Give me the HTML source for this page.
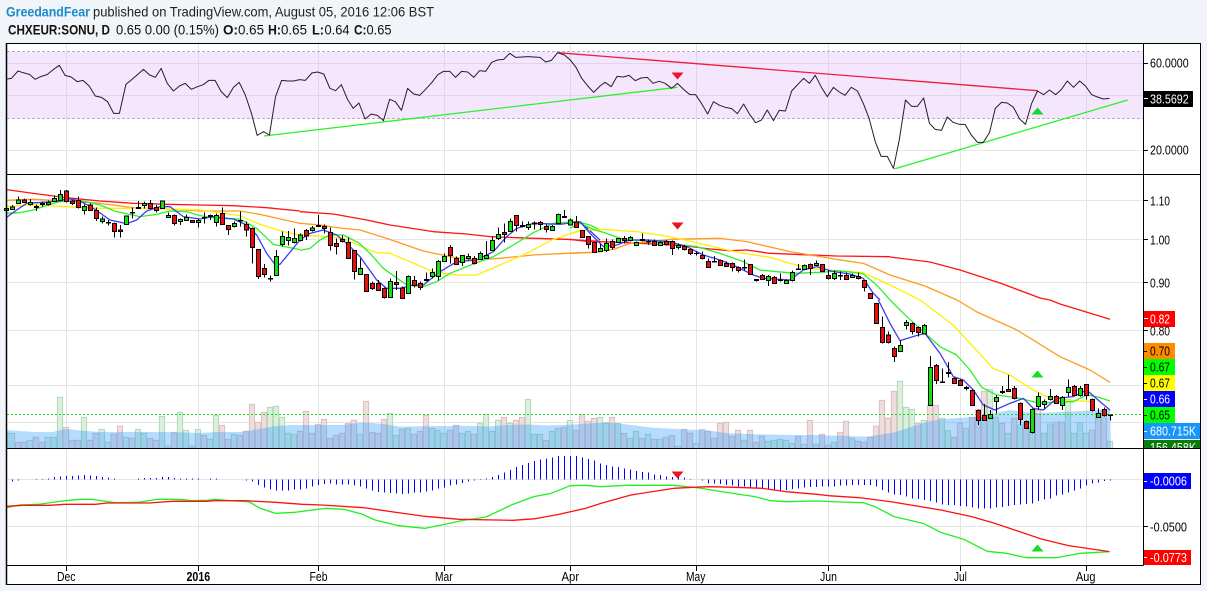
<!DOCTYPE html>
<html><head><meta charset="utf-8"><style>
html,body{margin:0;padding:0;background:#f1f4f8;width:1207px;height:591px;overflow:hidden}
svg{display:block;font-family:"Liberation Sans",Arial,sans-serif}
.ns{vector-effect:non-scaling-stroke;fill:none;stroke-linejoin:round}
.w{fill:none;stroke:#000;stroke-width:3}
.g{fill:#0fe30f;stroke:#000;stroke-width:3}
.r{fill:#e80f0f;stroke:#000;stroke-width:3}
.vg{fill:#dceedd;stroke:#aad6ae;stroke-width:2.5}
.vr{fill:#eedddd;stroke:#d9b9bb;stroke-width:2.5}
.ax{font-size:13px;fill:#000}
.lb{font-size:13px}
</style></head><body>
<svg width="1207" height="591" viewBox="0 0 1207 591" xmlns="http://www.w3.org/2000/svg">
<rect width="1207" height="591" fill="#f1f4f8"/>
<text x="6" y="16.5" font-size="14" font-weight="bold" fill="#1a8ccb" textLength="84" lengthAdjust="spacingAndGlyphs">GreedandFear</text>
<text x="93" y="16.5" font-size="14" fill="#222" textLength="341" lengthAdjust="spacingAndGlyphs">published on TradingView.com, August 05, 2016 12:06 BST</text>
<g font-size="14" fill="#111">
<text x="8" y="34.5" font-weight="bold" textLength="102" lengthAdjust="spacingAndGlyphs">CHXEUR:SONU, D</text>
<text x="116" y="34.5" textLength="103" lengthAdjust="spacingAndGlyphs">0.65 0.00 (0.15%)</text>
<text x="223" y="34.5" font-weight="bold" textLength="15" lengthAdjust="spacingAndGlyphs">O:</text>
<text x="238" y="34.5" textLength="26" lengthAdjust="spacingAndGlyphs">0.65</text>
<text x="268" y="34.5" font-weight="bold" textLength="13" lengthAdjust="spacingAndGlyphs">H:</text>
<text x="281" y="34.5" textLength="26" lengthAdjust="spacingAndGlyphs">0.65</text>
<text x="312" y="34.5" font-weight="bold" textLength="12" lengthAdjust="spacingAndGlyphs">L:</text>
<text x="324.5" y="34.5" textLength="25" lengthAdjust="spacingAndGlyphs">0.64</text>
<text x="354" y="34.5" font-weight="bold" textLength="12.5" lengthAdjust="spacingAndGlyphs">C:</text>
<text x="366.5" y="34.5" textLength="25" lengthAdjust="spacingAndGlyphs">0.65</text>
</g>
<rect x="6" y="43" width="1194" height="542" fill="#fff"/>

<!-- RSI band and grid -->
<rect x="7" y="52" width="1136" height="66.5" fill="#f4e7fd"/>
<path d="M66.5 44V174M198.5 44V174M318.5 44V174M444.5 44V174M570.5 44V174M696.5 44V174M828.5 44V174M960.5 44V174M1086.5 44V174M7 150.5H1143" stroke="#e5e5e5" stroke-width="1" fill="none"/>
<path d="M66.5 52V118M198.5 52V118M318.5 52V118M444.5 52V118M570.5 52V118M696.5 52V118M828.5 52V118M960.5 52V118M1086.5 52V118M7 63.5H1143M7 95.5H1143" stroke="#e1d5ec" stroke-width="1" fill="none"/>
<path d="M7 51.5H1143M7 118.5H1143" stroke="#b9a9c4" stroke-width="1" stroke-dasharray="3 2" fill="none"/>
<path d="M264 136L677.4 87.3M894.2 169L1127.7 100" stroke="#2cf22c" stroke-width="1.3" fill="none"/>
<path d="M557.6 52.7L1037.5 90.7" stroke="#f01c3c" stroke-width="1.3" fill="none"/>
<g transform="scale(.3827,.33333)"><polyline class="ns" stroke="#2a1a2a" stroke-width="1" points="18,237 30,235 47,213 60,218 77,223 92,238 108,229 123,224 140,208 155,196 170,226 186,231 202,245 217,241 233,258 249,288 265,292 281,305 297,340 312,340 329,253 345,238 375,208 391,225 406,232 421,205 437,250 453,273 469,258 484,250 500,268 516,260 531,254 546,241 562,241 578,275 594,293 610,262 625,247 641,285 657,340 672,406 689,395 704,405 720,290 736,241 752,243 767,243 783,239 798,241 815,219 830,216 846,222 862,265 877,272 892,254 908,298 923,325 938,309 954,357 970,342 986,346 1002,362 1018,298 1033,305 1049,331 1065,265 1081,282 1097,286 1112,268 1128,248 1144,224 1159,214 1175,214 1190,232 1206,214 1222,216 1238,232 1253,212 1269,214 1285,187 1300,180 1316,178 1332,160 1347,172 1380,170 1411,172 1426,186 1441,181 1457,158 1475,165 1490,180 1504,200 1520,235 1536,258 1551,277 1568,258"/></g>
<g transform="translate(600,0) scale(.38715,.33333)"><polyline class="ns" stroke="#2a1a2a" stroke-width="1" points="0,258 13,247 29,260 44,229 60,231 75,226 91,242 106,234 122,232 137,250 153,244 168,250 185,265 200,250 216,268 232,284 247,284 262,310 278,342 293,305 309,316 324,322 340,326 355,341 371,312 386,342 402,368 417,360 432,330 448,362 463,331 479,333 495,273 526,235 541,250 556,226 572,262 587,290 603,262 618,276 633,286 649,262 665,273 680,310 695,355 711,425 726,469 742,469 758,505 773,420 789,300 805,319 820,319 836,294 851,370 866,388 882,391 897,351 912,367 928,373 943,373 959,405 975,427 990,427 1006,398 1021,325 1037,307 1052,309 1068,322 1084,357 1099,373 1115,310 1130,273 1146,284 1161,270 1177,284 1192,268 1207,243 1223,262 1239,243 1254,258 1270,284 1285,291 1300,297 1316,295"/></g>
<path d="M671.5 72.500h12l-6 7z" fill="#f0102c"/>
<path d="M1031.500 114.500h12l-6-7z" fill="#0fd82f"/>

<!-- Main grid -->
<path d="M66.500 175V448M198.500 175V448M318.500 175V448M444.500 175V448M570.500 175V448M696.500 175V448M828.500 175V448M960.500 175V448M1086.500 175V448M7 200.500H1143M7 239.500H1143M7 282.500H1143M7 330.500H1143M7 385.500H1143M7 422.500H1143" stroke="#e4e4e4" stroke-width="1" fill="none"/>

<!-- Volume -->
<g transform="translate(0,385) scale(.33333)">
<path class="vg" d="M22 190V145H44V190M172 190V37H188V190M244 190V97H260V190M297 190V133H314V190M406 190V133H422V190M478 190V94H494V190M532 190V82H548V190M550 190V136H566V190M586 190V133H602V190M640 190V91H656V190M694 190V148H710V190M802 190V67H818V190M820 190V64H836V190M838 190V97H854V190M856 190V145H872V190M874 190V148H890V190M1072 190V148H1088V190M1162 190V85H1178V190M1216 190V130H1232V190M81 190V166H98V190M135 190V157H152V190M153 190V157H170V190M370 190V157H386V190M424 190V145H440V190M496 190V184H512V190M315 190V172H332V190M1180 190V151H1196V190M1288 190V130H1304V190M1306 190V136H1320V190M622 190V163H638V190"/>
<path class="vr" d="M46 190V172H62V190M63 190V172H80V190M99 190V157H116V190M117 190V172H134V190M189 190V127H206V190M207 190V166H224V190M225 190V166H242V190M261 190V166H278V190M279 190V145H296V190M333 190V148H350V190M352 190V124H368V190M388 190V160H404V190M442 190V160H458V190M460 190V166H476V190M514 190V142H530V190M568 190V184H584V190M604 190V151H620V190M658 190V121H674V190M676 190V163H692V190M712 190V151H728V190M730 190V139H746V190M748 190V58H764V190M766 190V112H782V190M784 190V82H800V190M892 190V139H908V190M910 190V79H926V190M928 190V145H944V190M946 190V118H962V190M964 190V103H980V190M982 190V160H998V190M1000 190V151H1016V190M1018 190V145H1034V190M1036 190V115H1052V190M1054 190V106H1070V190M1090 190V49H1106V190M1108 190V142H1124V190M1126 190V145H1142V190M1144 190V103H1160V190M1198 190V133H1214V190M1234 190V148H1250V190M1252 190V139H1268V190M1270 190V91H1286V190"/>
</g>
<g transform="translate(440,385) scale(.33333)">
<path class="vg" d="M2 190V145H20V190M58 190V145H74V190M76 190V139H92V190M112 190V115H128V190M130 190V88H146V190M148 190V139H164V190M166 190V106H182V190M202 190V115H218V190M256 190V43H272V190M274 190V148H290V190M292 190V148H308V190M328 190V139H344V190M346 190V130H362V190M382 190V106H398V190M472 190V97H488V190M490 190V115H506V190M526 190V115H542V190M562 190V160H578V190M580 190V139H596V190M616 190V148H632V190M652 190V163H668V190M706 190V184H722V190M760 190V175H776V190M904 190V166H920V190M976 190V169H992V190M994 190V166H1010V190M1012 190V163H1028V190M1030 190V166H1046V190M1048 190V175H1064V190M1084 190V178H1100V190M1120 190V178H1136V190M1174 190V172H1190V190M1228 190V160H1244V190"/>
<path class="vr" d="M22 190V136H38V190M40 190V121H56V190M94 190V148H110V190M184 190V97H200V190M220 190V106H236V190M238 190V97H254V190M310 190V166H326V190M364 190V127H380V190M400 190V136H416V190M418 190V88H434V190M436 190V109H452V190M454 190V100H470V190M508 190V97H524V190M544 190V145H560V190M598 190V160H614V190M634 190V163H650V190M670 190V157H686V190M688 190V151H704V190M724 190V133H740V190M742 190V145H758V190M778 190V133H794V190M796 190V139H812V190M814 190V160H830V190M832 190V115H848V190M850 190V112H866V190M868 190V154H884V190M886 190V136H902V190M922 190V136H938V190M940 190V172H956V190M958 190V154H974V190M1066 190V154H1082V190M1102 190V106H1118V190M1138 190V148H1154V190M1156 190V181H1172V190M1192 190V142H1208V190M1210 190V109H1226V190M1246 190V169H1262V190M1264 190V172H1280V190M1282 190V157H1298V190"/>
</g>
<g transform="translate(860,300) scale(.33333)">
<path class="vg" d="M112 444V244H128V444M130 444V322H146V444M148 444V328H164V444M184 444V361H200V444M238 444V355H254V444M256 444V392H272V444M310 444V385H326V444M382 444V268H398V444M400 444V352H416V444M436 444V400H452V444M472 444V375H488V444M508 444V385H524V444M544 444V400H560V444M562 444V372H578V444M616 444V298H632V444M634 444V400H650V444M652 444V368H668V444M670 444V400H686V444M742 444V424H758V444"/>
<path class="vr" d="M40 444V378H56V444M58 444V301H74V444M76 444V355H92V444M94 444V274H110V444M166 444V370H182V444M202 444V316H218V444M220 444V316H236V444M274 444V412H290V444M292 444V370H308V444M328 444V352H344V444M346 444V328H362V444M364 444V274H380V444M418 444V370H434V444M454 444V355H470V444M490 444V370H506V444M526 444V330H542V444M580 444V366H596V444M598 444V366H614V444M688 444V390H704V444M706 444V340H722V444M724 444V330H740V444"/>
</g>
<polygon fill="rgba(60,160,255,.38)" points="7,448 7,430 33,432 53,432 62,429.500 67,429 80,430.500 100,432 167,432 200,433 217,432 240,432 253,430 273,426.500 290,425 343,425 363,422.300 383,424 400,426.500 450,426 457,425.500 490,426.500 507,425 530,424.500 547,425.500 573,424.500 607,422.300 627,424.500 653,427.700 687,429.500 707,430.300 727,433.300 757,434.300 790,435 817,435 867,436.700 893,432.700 927,421.700 940,419.300 977,416.700 1010,410 1033,413.300 1067,411.700 1110,409.300 1111,448"/>
<path d="M7 414.500H1143" stroke="#12e012" stroke-width="1" stroke-dasharray="2 2" fill="none"/>

<!-- Moving averages -->
<g transform="translate(0,175) scale(.33333)" stroke-width="1.3">
<polyline class="ns" stroke="#ff1414" points="20,44 100,55 200,68 300,78 400,85 500,88 600,90 700,92 800,98 900,108"/>
<polyline class="ns" stroke="#ff9a1e" points="20,76 100,73 200,78 300,85 400,98 500,102 600,108 720,108 780,118 900,145"/>
<polyline class="ns" stroke="#ffee00" points="20,95 100,90 200,95 300,100 430,100 600,105 720,122 780,148 850,170 900,180"/>
<polyline class="ns" stroke="#2cf02c" points="20,115 60,113 100,105 150,88 180,80 250,78 300,90 350,110 420,125 470,118 510,108 560,110 600,122 650,130 720,132 770,160 820,208 900,224"/>
<polyline class="ns" stroke="#3c3cf0" points="20,127 50,105 80,85 130,82 180,78 200,70 240,78 280,100 330,135 380,146 410,135 440,108 480,95 510,95 550,125 600,132 640,125 700,132 740,150 770,180 800,235 825,268 840,268 900,195"/>
</g>
<g transform="translate(300,190) scale(.33333)" stroke-width="1.3">
<polyline class="ns" stroke="#ff1414" points="0,65 100,72 200,90 270,105 400,125 500,132 570,140 650,143 700,145 800,148 860,152 900,154"/>
<polyline class="ns" stroke="#ff9a1e" points="0,100 60,105 120,114 180,120 260,145 370,183 450,200 520,210 600,205 700,195 800,190 900,186"/>
<polyline class="ns" stroke="#ffee00" points="0,135 50,138 130,145 190,172 230,188 270,190 330,215 400,245 470,255 530,255 600,225 680,190 760,148 840,122 900,120"/>
<polyline class="ns" stroke="#2cf02c" points="0,181 30,175 60,150 90,135 130,135 175,158 210,190 250,235 285,260 320,285 370,290 410,275 450,250 520,222 580,200 640,165 700,128 760,100 830,95 870,105 900,120"/>
<polyline class="ns" stroke="#3c3cf0" points="0,150 30,130 70,120 110,135 140,160 180,200 230,270 260,295 300,295 340,285 370,285 420,245 470,215 530,210 580,185 620,140 650,115 700,100 780,103 840,95 900,150"/>
</g>
<g transform="translate(570,200) scale(.33333)" stroke-width="1.3">
<polyline class="ns" stroke="#ff1414" points="0,118 50,124 150,127 250,132 350,138 420,147 480,152 530,150 600,160 700,164 800,168 960,170"/>
<polyline class="ns" stroke="#ff9a1e" points="0,160 70,157 130,148 180,130 250,125 300,118 450,115 530,125 660,155 800,178 880,190 960,225"/>
<polyline class="ns" stroke="#ffee00" points="0,100 50,90 100,88 200,95 300,110 380,128 450,145 520,160 600,172 660,190 720,205 800,212 880,218 960,255"/>
<polyline class="ns" stroke="#2cf02c" points="0,85 30,70 70,88 110,100 160,118 220,122 300,130 380,140 450,160 520,185 570,210 620,215 680,220 720,218 760,217 800,212 840,216 880,222 920,255 960,300"/>
<polyline class="ns" stroke="#3c3cf0" points="30,65 60,100 100,140 140,135 180,120 230,120 300,125 350,140 400,165 450,180 500,200 550,225 580,235 660,240 700,210 740,200 790,215 840,222 880,235 910,280 930,300"/>
</g>
<polyline class="ns" stroke="#ff1414" stroke-width="1.3" points="890,257 930,262 960,270 1000,283 1040,298 1050,300 1060,304 1110,319.300"/>
<polyline class="ns" stroke="#ff9a1e" stroke-width="1.3" points="890,275 925,286 957,300 977,312 1017,330 1060,356.700 1090,370 1110,382.300"/>
<polyline class="ns" stroke="#ffee00" stroke-width="1.3" points="890,285 920,300 953,325 970,343.300 993,368.300 1010,375 1033,390 1047,396.700 1067,400 1093,401.700"/>
<g transform="translate(860,300) scale(.33333)" stroke-width="1.3">
<polyline class="ns" stroke="#2cf02c" points="90,0 130,40 195,100 240,140 290,165 330,210 365,262 410,285 480,295 540,310 600,305 640,305 680,285 710,290 750,303"/>
<polyline class="ns" stroke="#3c3cf0" points="55,0 90,70 120,122 175,105 195,100 240,160 280,230 310,240 340,270 370,315 405,330 450,310 490,295 520,325 550,330 590,295 640,290 680,270 720,305 750,330"/>
</g>

<!-- Candles A -->
<g transform="translate(.17,175) scale(.33333)" shape-rendering="crispEdges">
<path class="w" d="M19 100V106M37 90V103M55 65V86M73 70V83M91 72V92M109 88V108M127 80V94M145 76V92M163 62V80M181 45V77M199 45V82M217 75V90M235 65V100M253 88V118M271 85V108M289 98V138M307 125V145M325 135V152M343 142V188M361 150V188M379 122V150M397 98V130M415 78V102M433 80V100M451 75V102M469 90V112M487 76V102M505 112V128M523 118V152M541 130V150M559 118V138M577 135V144M595 130V158M613 112V145M631 118V135M649 115V155M667 98V150M685 150V180M703 140V158M721 110V155M739 140V185M757 158V265M775 222V312M793 267V308M811 302V320M829 225V302M847 170V215M865 168V212M883 160V205"/>
<path class="g" d="M13 100h12V106h-12zM31 96h12V103h-12zM49 75h12V86h-12zM85 82h12V88h-12zM121 86h12V89h-12zM139 82h12V88h-12zM157 70h12V80h-12zM175 58h12V77h-12zM247 94h12V106h-12zM301 132h12V140h-12zM319 142h12V144h-12zM373 123h12V149h-12zM427 85h12V91h-12zM481 78h12V100h-12zM499 121h12V127h-12zM535 133h12V139h-12zM553 127h12V136h-12zM589 136h12V142h-12zM607 127h12V129h-12zM625 122h12V124h-12zM643 121h12V143h-12zM697 145h12V154h-12zM805 310h12V312h-12zM823 244h12V301h-12zM841 184h12V208h-12zM859 188h12V196h-12zM877 190h12V203h-12z"/>
<path class="r" d="M67 75h12V83h-12zM103 95h12V97h-12zM193 48h12V80h-12zM211 78h12V86h-12zM229 76h12V97h-12zM265 90h12V106h-12zM283 106h12V131h-12zM337 146h12V170h-12zM355 165h12V170h-12zM391 112h12V114h-12zM409 98h12V100h-12zM445 86h12V100h-12zM463 97h12V106h-12zM517 121h12V146h-12zM571 136h12V142h-12zM661 115h12V148h-12zM679 151h12V163h-12zM715 136h12V138h-12zM733 148h12V165h-12zM751 160h12V217h-12zM769 223h12V304h-12zM787 280h12V298h-12z"/>
</g>
<!-- Candles B -->
<g transform="translate(300.17,190) scale(.33333)" shape-rendering="crispEdges">
<path class="w" d="M1 130V155M19 117V150M37 108V125M55 75V110M73 103V130M91 112V182M109 145V193M127 136V158M145 143V207M163 180V268M181 205V255M199 253V305M217 275V300M235 270V303M253 293V326M271 265V323M289 243V300M307 290V327M325 257V312M343 258V292M361 275V300M379 248V275M397 235V265M415 210V272M433 190V216M451 165V220M469 200V225M487 196V228M505 190V208M523 198V224M541 185V210M559 153V207M577 140V183M595 112V150M613 100V158M631 85V125M649 75V125M667 95V112M685 95V120M703 95V118M721 93V120M739 103V128M757 105V122M775 70V101M793 60V82"/>
<path class="g" d="M-5 135h12V151h-12zM31 114h12V121h-12zM175 235h12V253h-12zM265 274h12V322h-12zM319 259h12V310h-12zM391 247h12V260h-12zM409 214h12V260h-12zM427 199h12V214h-12zM481 196h12V217h-12zM499 199h12V205h-12zM535 190h12V208h-12zM553 196h12V205h-12zM571 151h12V181h-12zM589 133h12V145h-12zM625 94h12V124h-12zM679 103h12V112h-12zM697 99h12V102h-12zM751 109h12V121h-12zM769 73h12V100h-12zM787 79h12V82h-12z"/>
<path class="r" d="M13 122h12V138h-12zM49 106h12V109h-12zM67 109h12V115h-12zM85 128h12V166h-12zM103 160h12V169h-12zM121 148h12V154h-12zM139 157h12V205h-12zM157 181h12V244h-12zM193 253h12V304h-12zM211 280h12V296h-12zM229 280h12V301h-12zM247 295h12V323h-12zM283 277h12V283h-12zM301 294h12V325h-12zM337 271h12V287h-12zM355 280h12V292h-12zM373 268h12V271h-12zM445 172h12V196h-12zM463 205h12V223h-12zM517 205h12V220h-12zM607 127h12V133h-12zM643 76h12V106h-12zM661 106h12V109h-12zM715 98h12V103h-12zM733 109h12V118h-12z"/>
</g>
<!-- Candles C -->
<g transform="translate(570.17,200) scale(.33333)" shape-rendering="crispEdges">
<path class="w" d="M1 55V76M19 48V83M37 91V112M55 108V146M73 127V157M91 130V155M109 115V156M127 118V148M145 115V127M163 108V130M181 108V125M199 124V138M217 100V125M235 118V135M253 118V138M271 124V138M289 120V136M307 122V165M325 130V148M343 135V152M361 145V165M379 155V166M397 155V178M415 175V204M433 168V188M451 178V198M469 185V200M487 188V215M505 200V218M523 178V212M541 192V224M559 238V245M577 222V240M595 225V258M613 228V252M631 220V245M649 238V252M667 212V244M685 192V210M703 194V210M721 190V225M739 182V198M757 192V216M775 212V238M793 212V240M811 214V240M829 218V240M847 220V234M865 218V238M883 240V275M901 280V295"/>
<path class="g" d="M-5 60h12V75h-12zM85 145h12V154h-12zM103 130h12V151h-12zM139 115h12V127h-12zM175 112h12V121h-12zM193 127h12V136h-12zM229 124h12V126h-12zM265 127h12V136h-12zM319 136h12V142h-12zM373 160h12V161h-12zM589 229h12V241h-12zM625 240h12V241h-12zM643 241h12V250h-12zM661 217h12V241h-12zM697 196h12V208h-12zM733 190h12V196h-12zM787 220h12V235h-12zM841 226h12V232h-12z"/>
<path class="r" d="M13 66h12V82h-12zM31 91h12V112h-12zM49 109h12V133h-12zM67 127h12V157h-12zM121 124h12V142h-12zM157 115h12V121h-12zM211 118h12V121h-12zM247 124h12V136h-12zM283 124h12V134h-12zM301 124h12V145h-12zM337 139h12V148h-12zM355 148h12V160h-12zM391 166h12V175h-12zM409 184h12V202h-12zM427 184h12V186h-12zM445 181h12V196h-12zM463 190h12V199h-12zM481 190h12V202h-12zM499 202h12V211h-12zM517 202h12V204h-12zM535 193h12V223h-12zM553 238h12V241h-12zM571 226h12V238h-12zM607 232h12V250h-12zM679 207h12V208h-12zM715 193h12V205h-12zM751 193h12V214h-12zM769 226h12V235h-12zM805 226h12V228h-12zM823 226h12V238h-12zM859 229h12V235h-12zM877 241h12V262h-12zM895 280h12V295h-12z"/>
</g>
<!-- Candles D -->
<g transform="translate(860.17,300) scale(.33333)" shape-rendering="crispEdges">
<path class="w" d="M49 10V72M67 50V130M85 95V130M103 140V186M121 122V156M139 60V88M157 68V104M175 80V110M193 72V103M211 168V318M229 192V252M247 205V248M265 186V232M283 232V252M301 238V258M319 258V272M337 268V318M355 328V375M373 312V362M391 330V356M409 285V340M427 258V282M445 225V276M463 258V298M481 308V375M499 362V387M517 325V400M535 278V328M553 298V325M571 267V302M589 285V312M607 288V330M625 238V290M643 255V288M661 258V290M679 252V298M697 296V335M715 325V353M733 322V350M751 345V362"/>
<path class="g" d="M115 136h12V154h-12zM133 67h12V76h-12zM187 76h12V102h-12zM205 202h12V316h-12zM241 246h12V247h-12zM385 343h12V355h-12zM403 292h12V304h-12zM511 328h12V397h-12zM529 289h12V319h-12zM547 304h12V313h-12zM565 289h12V298h-12zM601 292h12V316h-12zM619 262h12V277h-12zM655 265h12V286h-12zM709 340h12V352h-12z"/>
<path class="r" d="M43 10h12V70h-12zM61 82h12V128h-12zM79 105h12V128h-12zM97 145h12V170h-12zM151 70h12V94h-12zM169 82h12V97h-12zM223 196h12V241h-12zM259 217h12V220h-12zM277 235h12V250h-12zM295 241h12V256h-12zM313 262h12V265h-12zM331 271h12V316h-12zM349 331h12V361h-12zM367 346h12V361h-12zM421 274h12V277h-12zM439 268h12V274h-12zM457 265h12V295h-12zM475 310h12V358h-12zM493 364h12V385h-12zM583 289h12V310h-12zM637 259h12V286h-12zM673 253h12V286h-12zM691 298h12V331h-12zM727 328h12V346h-12zM745 345h12V347h-12z"/>
</g>
<path d="M671.500 222.500h12l-6 7z" fill="#f0101c"/>
<path d="M1031.500 377.500h12l-6-7z" fill="#0fe01f"/>

<!-- MACD -->
<path d="M66.500 449V565M198.500 449V565M318.500 449V565M444.500 449V565M570.500 449V565M696.500 449V565M828.500 449V565M960.500 449V565M1086.500 449V565M7 479.500H1143M7 526.500H1143" stroke="#e4e4e4" stroke-width="1" fill="none"/>
<g transform="translate(0,445) scale(1,.33333)">
<path class="ns" stroke="#0000ff" stroke-width="1" shape-rendering="crispEdges" d="M12.500 104V110M18.500 104V107M36.500 104V102M42.500 104V102M48.500 104V100M54.500 104V96M60.500 104V94M66.500 104V93M72.500 104V93M78.500 104V92M84.500 104V90M90.500 104V92M96.500 104V93M102.500 104V96M108.500 104V98M114.500 104V101M138.500 104V100M144.500 104V99M150.500 104V99M156.500 104V99M162.500 104V96M168.500 104V96M174.500 104V99M180.500 104V101M186.500 104V101M192.500 104V101M198.500 104V101M210.500 104V101M216.500 104V101M246.500 104V107M252.500 104V110M258.500 104V120M264.500 104V128M270.500 104V134M276.500 104V137M282.500 104V137M288.500 104V137M294.500 104V133M300.500 104V133M306.500 104V130M312.500 104V125M318.500 104V120M324.500 104V117M330.500 104V116M336.500 104V118M342.500 104V118M348.500 104V118M354.500 104V121M360.500 104V125M366.500 104V130M372.500 104V137M378.500 104V141M384.500 104V143M390.500 104V144M396.500 104V145M402.500 104V147M408.500 104V145M414.500 104V143M420.500 104V143M426.500 104V140M432.500 104V136M438.500 104V130M444.500 104V128M450.500 104V122M456.500 104V118M462.500 104V114M468.500 104V110M474.500 104V106M480.500 104V102M486.500 104V100M492.500 104V96M498.500 104V90M504.500 104V83M510.500 104V75M516.500 104V66M522.500 104V60M528.500 104V54M534.500 104V48M540.500 104V44M546.500 104V40M552.500 104V38M558.500 104V33M564.500 104V33M570.500 104V33M576.500 104V33M582.500 104V37M588.500 104V42M594.500 104V47M600.500 104V55M606.500 104V60M612.500 104V64M618.500 104V66M624.500 104V70M630.500 104V73M636.500 104V78M642.500 104V81M648.500 104V82M654.500 104V88M660.500 104V90M666.500 104V94M672.500 104V96M678.500 104V94M684.500 104V98M690.500 104V102M702.500 104V107M708.500 104V115M714.500 104V116M720.500 104V117M726.500 104V120M732.500 104V122M738.500 104V124M744.500 104V124M750.500 104V127M756.500 104V128M762.500 104V130M768.500 104V132M774.500 104V135M780.500 104V136M786.500 104V135M792.500 104V132M798.500 104V130M804.500 104V128M810.500 104V126M816.500 104V126M822.500 104V125M828.500 104V124M834.500 104V124M840.500 104V122M846.500 104V122M852.500 104V120M858.500 104V120M864.500 104V120M870.500 104V120M876.500 104V125M882.500 104V135M888.500 104V143M894.500 104V148M900.500 104V150M906.500 104V155M912.500 104V160M918.500 104V162M924.500 104V165M930.500 104V168M936.500 104V172M942.500 104V178M948.500 104V180M954.500 104V180M960.500 104V183M966.500 104V185M972.500 104V188M978.500 104V190M984.500 104V191M990.500 104V191M996.500 104V188M1002.500 104V186M1008.500 104V183M1014.500 104V180M1020.500 104V178M1026.500 104V177M1032.500 104V176M1038.500 104V168M1044.500 104V163M1050.500 104V160M1056.500 104V152M1062.500 104V148M1068.500 104V143M1074.500 104V137M1080.500 104V130M1086.500 104V122M1092.500 104V115M1098.500 104V112M1104.500 104V108M1110.500 104V107"/>
</g>
<g transform="translate(0,445) scale(.3827,.33333)">
<polyline class="ns" stroke="#20f020" stroke-width="1.300" points="18,188 50,180 100,178 170,167 210,163 240,163 300,173 360,172 410,163 450,163 480,164 500,167 540,166 560,163 600,167 650,170 680,190 720,205 770,202 850,190 900,193 945,207 980,225 1040,242 1110,250 1170,236 1210,226 1270,216 1340,178 1395,155 1440,145 1490,122 1530,121 1568,125"/>
<polyline class="ns" stroke="#ff1010" stroke-width="1.300" points="18,184 60,181 130,181 170,178 250,178 280,174 390,174 450,169 540,169 560,167 640,167 720,172 790,178 840,180 950,188 1040,203 1110,214 1200,223 1340,226 1400,221 1460,208 1530,190 1568,176"/>
</g>
<g transform="translate(600,445) scale(.38715,.33333)">
<polyline class="ns" stroke="#20f020" stroke-width="1.300" points="0,125 70,121 190,121 250,128 320,141 400,155 440,167 480,170 560,168 620,171 680,173 710,185 760,215 835,235 880,262 940,283 1000,319 1050,325 1100,338 1180,338 1240,325 1316,320"/>
<polyline class="ns" stroke="#ff1010" stroke-width="1.300" points="0,176 80,150 190,130 240,127 280,125 350,127 420,130 480,140 560,148 590,152 670,158 750,170 880,195 960,215 1020,235 1140,282 1210,302 1316,320"/>
</g>
<path d="M671.500 471.500h12l-6 7z" fill="#f0101c"/>
<path d="M1031.500 551.500h12l-6-7z" fill="#0fe01f"/>

<!-- Axis backgrounds & frame -->
<rect x="1143" y="44" width="57" height="522" fill="#fff"/>
<g fill="#000">
<rect x="1143" y="63" width="5" height="1"/><rect x="1143" y="150" width="5" height="1"/>
<rect x="1143" y="200" width="5" height="1"/><rect x="1143" y="239" width="5" height="1"/><rect x="1143" y="282" width="5" height="1"/><rect x="1143" y="330" width="5" height="1"/>
<rect x="1143" y="526" width="5" height="1"/>
<rect x="66" y="566" width="1" height="5"/><rect x="198" y="566" width="1" height="5"/><rect x="318" y="566" width="1" height="5"/><rect x="444" y="566" width="1" height="5"/><rect x="570" y="566" width="1" height="5"/><rect x="696" y="566" width="1" height="5"/><rect x="828" y="566" width="1" height="5"/><rect x="960" y="566" width="1" height="5"/><rect x="1086" y="566" width="1" height="5"/>
</g>
<rect x="1143" y="91" width="50" height="16" fill="#000"/>
<rect x="1143" y="311" width="32" height="16" fill="#ff0000"/>
<rect x="1143" y="343" width="32" height="16" fill="#ff8c00"/>
<rect x="1143" y="359" width="32" height="16" fill="#00ff00"/>
<rect x="1143" y="375" width="32" height="16" fill="#ffff00"/>
<rect x="1143" y="391" width="32" height="16" fill="#0000ff"/>
<rect x="1143" y="407" width="32" height="16" fill="#00ff00"/>
<rect x="1143" y="423" width="57" height="16" fill="#1696f8"/>
<rect x="1143" y="440" width="57" height="8" fill="#0a7a0a"/>
<rect x="1143" y="473" width="48" height="16" fill="#0000ff"/>
<rect x="1143" y="550" width="48" height="15" fill="#ff0000"/>
<svg x="1143" y="440" width="57" height="8" viewBox="0 0 57 8"><text x="7" y="12" class="lb" fill="#fff" textLength="46" lengthAdjust="spacingAndGlyphs">156.458K</text></svg>
<g class="ax">
<text x="1150" y="67.500" textLength="38.700" lengthAdjust="spacingAndGlyphs">60.0000</text>
<text x="1150" y="154.500" textLength="38.700" lengthAdjust="spacingAndGlyphs">20.0000</text>
<text x="1150" y="103.500" fill="#fff" textLength="38.700" lengthAdjust="spacingAndGlyphs">38.5692</text>
<text x="1150" y="205.500" textLength="20" lengthAdjust="spacingAndGlyphs">1.10</text>
<text x="1150" y="244.500" textLength="20" lengthAdjust="spacingAndGlyphs">1.00</text>
<text x="1150" y="287.500" textLength="20" lengthAdjust="spacingAndGlyphs">0.90</text>
<text x="1150" y="335.500" textLength="20" lengthAdjust="spacingAndGlyphs">0.80</text>
<text x="1150" y="323.500" fill="#fff" textLength="20" lengthAdjust="spacingAndGlyphs">0.82</text>
<text x="1150" y="355.500" textLength="20" lengthAdjust="spacingAndGlyphs">0.70</text>
<text x="1150" y="371.500" textLength="20" lengthAdjust="spacingAndGlyphs">0.67</text>
<text x="1150" y="387.500" textLength="20" lengthAdjust="spacingAndGlyphs">0.67</text>
<text x="1150" y="403.500" fill="#fff" textLength="20" lengthAdjust="spacingAndGlyphs">0.66</text>
<text x="1150" y="419.500" textLength="20" lengthAdjust="spacingAndGlyphs">0.65</text>
<text x="1150" y="435.500" fill="#fff" textLength="46" lengthAdjust="spacingAndGlyphs">680.715K</text>
<text x="1150" y="485.500" fill="#fff" textLength="37" lengthAdjust="spacingAndGlyphs">-0.0006</text>
<text x="1150" y="531.500" textLength="37" lengthAdjust="spacingAndGlyphs">-0.0500</text>
<text x="1150" y="562" fill="#fff" textLength="37" lengthAdjust="spacingAndGlyphs">-0.0773</text>
<text x="57" y="581" textLength="18.500" lengthAdjust="spacingAndGlyphs">Dec</text>
<text x="186.500" y="581" font-weight="bold" textLength="23.700" lengthAdjust="spacingAndGlyphs">2016</text>
<text x="309.500" y="581" textLength="18" lengthAdjust="spacingAndGlyphs">Feb</text>
<text x="435" y="581" textLength="17.600" lengthAdjust="spacingAndGlyphs">Mar</text>
<text x="561.500" y="581" textLength="17.600" lengthAdjust="spacingAndGlyphs">Apr</text>
<text x="686" y="581" textLength="19.400" lengthAdjust="spacingAndGlyphs">May</text>
<text x="820" y="581" textLength="17" lengthAdjust="spacingAndGlyphs">Jun</text>
<text x="954" y="581" textLength="12.800" lengthAdjust="spacingAndGlyphs">Jul</text>
<text x="1076" y="581" textLength="19.400" lengthAdjust="spacingAndGlyphs">Aug</text>
</g>
<g fill="#000">
<rect x="1143" y="98" width="5" height="1" fill="#fff"/>
<rect x="1143" y="318" width="5" height="1" fill="#fff"/><rect x="1143" y="351" width="4" height="1"/><rect x="1143" y="367" width="4" height="1"/><rect x="1143" y="383" width="4" height="1"/><rect x="1143" y="399" width="4" height="1" fill="#fff"/><rect x="1143" y="415" width="4" height="1"/><rect x="1143" y="431" width="4" height="1" fill="#fff"/><rect x="1143" y="481" width="4" height="1" fill="#fff"/><rect x="1143" y="557" width="4" height="1" fill="#fff"/>
</g>
<path d="M6.500 43.500H1200.500V584.500H6.500ZM6.500 174.500H1200.500M6.500 448.500H1200.500M6.500 565.500H1143.500M1143.500 43.500V565.500" fill="none" stroke="#000" stroke-width="1"/>
<path d="M6.500 43V585" fill="none" stroke="#000" stroke-width="1.500"/>
</svg>
</body></html>
